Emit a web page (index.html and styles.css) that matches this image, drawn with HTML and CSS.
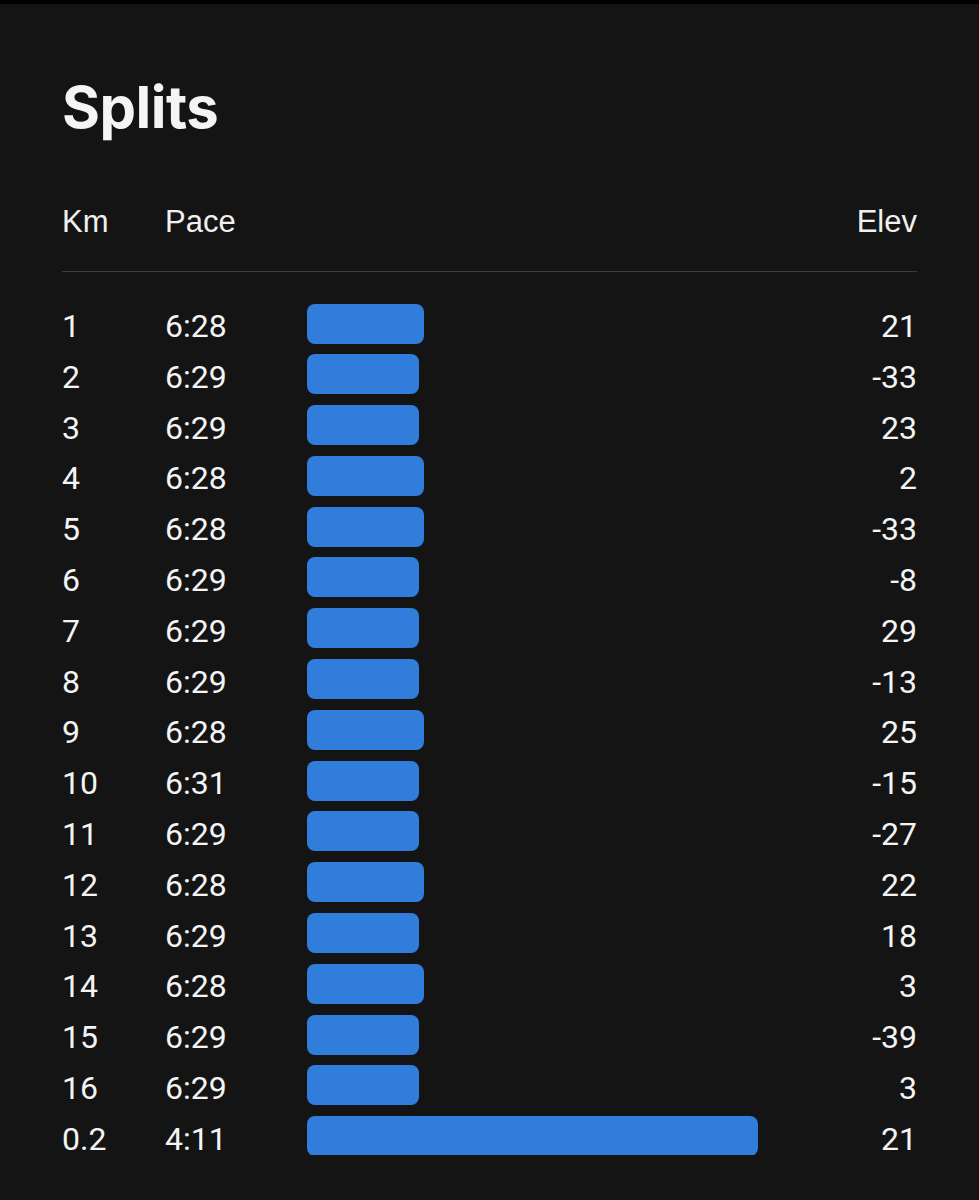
FILE: index.html
```html
<!DOCTYPE html>
<html>
<head>
<meta charset="utf-8">
<link rel="stylesheet" href="styles.css">
</head>
<body>
<div class="topbar"></div>
<main class="panel">
  <h1 class="title">Splits</h1>
  <div class="head">
    <span>Km</span>
    <span>Pace</span>
    <span></span>
    <span class="right">Elev</span>
  </div>
  <div class="rule"></div>
  <div class="rows">
    <div class="row"><span>1</span><span>6:28</span><div class="bar" style="width:117px"></div><span class="right">21</span></div>
    <div class="row"><span>2</span><span>6:29</span><div class="bar" style="width:112px"></div><span class="right">-33</span></div>
    <div class="row"><span>3</span><span>6:29</span><div class="bar" style="width:112px"></div><span class="right">23</span></div>
    <div class="row"><span>4</span><span>6:28</span><div class="bar" style="width:117px"></div><span class="right">2</span></div>
    <div class="row"><span>5</span><span>6:28</span><div class="bar" style="width:117px"></div><span class="right">-33</span></div>
    <div class="row"><span>6</span><span>6:29</span><div class="bar" style="width:112px"></div><span class="right">-8</span></div>
    <div class="row"><span>7</span><span>6:29</span><div class="bar" style="width:112px"></div><span class="right">29</span></div>
    <div class="row"><span>8</span><span>6:29</span><div class="bar" style="width:112px"></div><span class="right">-13</span></div>
    <div class="row"><span>9</span><span>6:28</span><div class="bar" style="width:117px"></div><span class="right">25</span></div>
    <div class="row"><span>10</span><span>6:31</span><div class="bar" style="width:112px"></div><span class="right">-15</span></div>
    <div class="row"><span>11</span><span>6:29</span><div class="bar" style="width:112px"></div><span class="right">-27</span></div>
    <div class="row"><span>12</span><span>6:28</span><div class="bar" style="width:117px"></div><span class="right">22</span></div>
    <div class="row"><span>13</span><span>6:29</span><div class="bar" style="width:112px"></div><span class="right">18</span></div>
    <div class="row"><span>14</span><span>6:28</span><div class="bar" style="width:117px"></div><span class="right">3</span></div>
    <div class="row"><span>15</span><span>6:29</span><div class="bar" style="width:112px"></div><span class="right">-39</span></div>
    <div class="row"><span>16</span><span>6:29</span><div class="bar" style="width:112px"></div><span class="right">3</span></div>
    <div class="row"><span>0.2</span><span>4:11</span><div class="bar" style="width:451px"></div><span class="right">21</span></div>
  </div>
</main>
</body>
</html>
```

FILE: styles.css
```css
html, body {
  margin: 0;
  padding: 0;
  background: #141414;
  color: #f4f4f4;
}
body {
  font-family: Roboto, "Noto Sans", sans-serif;
}
.topbar {
  height: 4px;
  background: #000;
}
.panel {
  padding: 0 62px 0 62px;
}
.title {
  margin: 0;
  padding-top: 70px;
  font-family: Inter, Roboto, sans-serif;
  font-weight: 700;
  font-size: 58px;
  line-height: 66px;
  letter-spacing: -0.5px;
}
.head {
  display: grid;
  grid-template-columns: 103px 142px 1fr auto;
  font-family: "Liberation Sans", Arial, sans-serif;
  font-size: 31px;
  line-height: 36px;
  margin-top: 64px;
  color: #f0f0f0;
}
.right {
  text-align: right;
}
.rule {
  height: 1px;
  background: #3c3c3c;
  margin-top: 31px;
}
.rows {
  display: flex;
  flex-direction: column;
  gap: 10.8px;
  margin-top: 30px;
}
.row {
  display: grid;
  grid-template-columns: 103px 142px 1fr auto;
  align-items: center;
  height: 40px;
  font-size: 32px;
}
.row span {
  padding-top: 5px;
}
.bar {
  height: 40px;
  border-radius: 8px;
  background: #317ddc;
}
```
